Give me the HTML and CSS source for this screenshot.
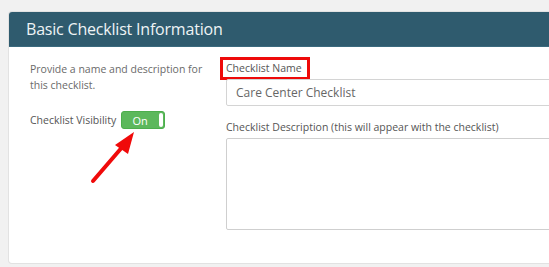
FILE: index.html
```html
<!DOCTYPE html>
<html>
<head>
<meta charset="utf-8">
<link rel="stylesheet" href="styles.css">
</head>
<body>
<div class="page">
  <section class="card">
    <header class="card-head">Basic Checklist Information</header>
    <div class="card-body">
      <div class="side">
        <p class="intro">Provide a name and description for this checklist.</p>
        <div class="vis-row">
          <span class="vis-label">Checklist Visibility</span>
          <span class="toggle"><span class="toggle-text">On</span><span class="knob"></span></span>
        </div>
      </div>
      <div class="main">
        <label class="field-label highlighted">Checklist Name</label>
        <div class="input">Care Center Checklist</div>
        <label class="field-label desc">Checklist Description (this will appear with the checklist)</label>
        <div class="textarea"></div>
      </div>
    </div>
  </section>
  <svg class="arrow" width="549" height="267" viewBox="0 0 549 267">
    <line x1="93" y1="181" x2="124" y2="145" stroke="#f00a0a" stroke-width="4" stroke-linecap="round"/>
    <polygon points="134,132 115,145 128,154" fill="#f00a0a"/>
  </svg>
</div>
</body>
</html>
```

FILE: styles.css
```css
html, body {
  margin: 0;
  padding: 0;
  background: #f1f1f1;
  overflow: hidden;
  width: 549px;
  height: 267px;
}
.page {
  position: relative;
  padding: 12px 0 0 9px;
  font-family: "Open Sans", "Liberation Sans", sans-serif;
}
.card {
  width: 640px;
  background: #fff;
  border-radius: 3px;
  box-shadow: 0 0 0 1px #e2e2e2;
  overflow: hidden;
}
.card-head {
  height: 35px;
  line-height: 35px;
  background: #2f5b6e;
  color: #eef3f5;
  font-size: 16px;
  letter-spacing: -0.2px;
  padding-left: 17px;
  border-bottom: 1px solid #3b6a7e;
  box-sizing: border-box;
}
.card-body {
  display: grid;
  grid-template-columns: 217px 1fr;
  padding-bottom: 33px;
}
.side {
  padding: 14px 0 0 21px;
}
.intro {
  margin: 0;
  width: 185px;
  font-size: 10.5px;
  line-height: 16px;
  color: #6a6a6a;
}
.vis-row {
  display: flex;
  align-items: center;
  gap: 5px;
  margin-top: 18px;
}
.vis-label {
  font-size: 10.5px;
  color: #555;
}
.toggle {
  position: relative;
  display: inline-flex;
  align-items: center;
  width: 44px;
  height: 18px;
  box-sizing: border-box;
  background: #5cb85c;
  border: 1px solid #4cae4c;
  border-radius: 3px;
}
.toggle-text {
  flex: 1;
  text-align: center;
  color: #fff;
  font-size: 11px;
  padding-right: 6px;
}
.knob {
  position: absolute;
  right: 1px;
  top: 1px;
  width: 4px;
  height: 14px;
  background: #fff;
  border-radius: 2px;
}
.main {
  display: flex;
  flex-direction: column;
  align-items: flex-start;
  padding-top: 10px;
}
.field-label {
  font-size: 10.5px;
  line-height: 14px;
  color: #555;
}
.highlighted {
  border: 3px solid #ee0a0a;
  padding: 1px 5px 2px 3px;
  margin-left: -6px;
}
.input {
  align-self: stretch;
  height: 27px;
  box-sizing: border-box;
  border: 1px solid #d4d4d4;
  border-radius: 2px;
  padding-left: 9px;
  line-height: 25px;
  font-size: 12px;
  color: #666;
  margin-top: -1px;
}
.desc {
  margin-top: 14px;
}
.textarea {
  align-self: stretch;
  height: 92px;
  box-sizing: border-box;
  border: 1px solid #cfcfcf;
  border-radius: 2px;
  margin-top: 4px;
}
.arrow {
  position: absolute;
  left: 0;
  top: 0;
  pointer-events: none;
}
```
